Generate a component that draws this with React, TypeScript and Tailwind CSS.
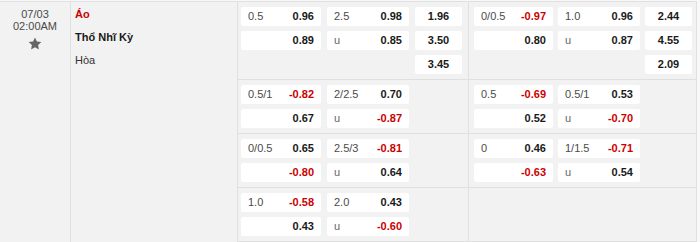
import React from "react";

type Cell = { l?: string; v: string } | null;
type Row = [Cell, Cell, string | null];

const isNeg = (v: string) => v.startsWith("-");

function Box({ cell, w }: { cell: Cell; w: string }) {
  if (!cell) return <div className={w} />;
  return (
    <div className={`${w} h-[19px] bg-white rounded-[2px] flex items-center justify-between px-[7px] leading-[19px]`}>
      <span className={cell.l === "u" ? "text-[#666]" : "text-[#4a4a4a]"}>{cell.l ?? ""}</span>
      <span className={`font-bold ${isNeg(cell.v) ? "text-[#cc0000]" : "text-[#1a1a1a]"}`}>{cell.v}</span>
    </div>
  );
}

function One({ v, w }: { v: string | null; w: string }) {
  if (!v) return <div className={w} />;
  return (
    <div className={`${w} h-[19px] bg-white rounded-[2px] flex items-center justify-center leading-[19px] font-bold text-[#1a1a1a]`}>
      {v}
    </div>
  );
}

function SectionA({ rows }: { rows: Row[] }) {
  return (
    <div className="w-[231px] shrink-0 border-r border-[#e0e0e0] pl-[3px] py-[5px] flex flex-col gap-[5px]">
      {rows.map((r, i) => (
        <div key={i} className="flex gap-[6px] h-[19px]">
          <Box cell={r[0]} w="w-[80px]" />
          <Box cell={r[1]} w="w-[82px]" />
          <One v={r[2]} w="w-[47px]" />
        </div>
      ))}
    </div>
  );
}

function SectionB({ rows }: { rows: Row[] }) {
  return (
    <div className="w-[228px] shrink-0 border-r border-[#e0e0e0] pl-[5px] py-[5px] flex flex-col gap-[5px]">
      {rows.map((r, i) => (
        <div key={i} className="flex gap-[5px] h-[19px]">
          <Box cell={r[0]} w="w-[79px]" />
          <Box cell={r[1]} w="w-[82px]" />
          <One v={r[2]} w="w-[47px]" />
        </div>
      ))}
    </div>
  );
}

const groups: { a: Row[]; b: Row[] }[] = [
  {
    a: [
      [{ l: "0.5", v: "0.96" }, { l: "2.5", v: "0.98" }, "1.96"],
      [{ v: "0.89" }, { l: "u", v: "0.85" }, "3.50"],
      [null, null, "3.45"],
    ],
    b: [
      [{ l: "0/0.5", v: "-0.97" }, { l: "1.0", v: "0.96" }, "2.44"],
      [{ v: "0.80" }, { l: "u", v: "0.87" }, "4.55"],
      [null, null, "2.09"],
    ],
  },
  {
    a: [
      [{ l: "0.5/1", v: "-0.82" }, { l: "2/2.5", v: "0.70" }, null],
      [{ v: "0.67" }, { l: "u", v: "-0.87" }, null],
    ],
    b: [
      [{ l: "0.5", v: "-0.69" }, { l: "0.5/1", v: "0.53" }, null],
      [{ v: "0.52" }, { l: "u", v: "-0.70" }, null],
    ],
  },
  {
    a: [
      [{ l: "0/0.5", v: "0.65" }, { l: "2.5/3", v: "-0.81" }, null],
      [{ v: "-0.80" }, { l: "u", v: "0.64" }, null],
    ],
    b: [
      [{ l: "0", v: "0.46" }, { l: "1/1.5", v: "-0.71" }, null],
      [{ v: "-0.63" }, { l: "u", v: "0.54" }, null],
    ],
  },
  {
    a: [
      [{ l: "1.0", v: "-0.58" }, { l: "2.0", v: "0.43" }, null],
      [{ v: "0.43" }, { l: "u", v: "-0.60" }, null],
    ],
    b: [
      [null, null, null],
      [null, null, null],
    ],
  },
];

export default function App() {
  return (
    <div className="w-[700px] h-[242px] overflow-hidden bg-[#f8f8f8] pt-[1px] font-['Liberation_Sans',Arial,sans-serif] text-[11px]">
      <div className="w-[697px] flex bg-[#f2f2f2] border-t border-[#e0e0e0]">
        <div className="w-[71px] shrink-0 border-r border-[#e0e0e0] pt-[6px] flex flex-col items-center text-[#4a4a4a] leading-[12px]">
          <div>07/03</div>
          <div>02:00AM</div>
          <svg className="mt-[5px]" width="14" height="13" viewBox="0 0 24 23">
            <path
              d="M12 0.8l3.4 7.1 7.8 1-5.7 5.4 1.4 7.7L12 18.3 5.1 22l1.4-7.7L0.8 8.9l7.8-1z"
              fill="#666"
            />
          </svg>
        </div>
        <div className="w-[167px] shrink-0 border-r border-[#e0e0e0] pl-[4px] pt-[1px] leading-[23px]">
          <div className="font-bold text-[#cc0000]">Áo</div>
          <div className="font-bold text-[#1a1a1a]">Thổ Nhĩ Kỳ</div>
          <div className="text-[#333]">Hòa</div>
        </div>
        <div className="flex flex-col">
          {groups.map((g, i) => (
            <div key={i} className="flex border-b border-[#e0e0e0]">
              <SectionA rows={g.a} />
              <SectionB rows={g.b} />
            </div>
          ))}
        </div>
      </div>
    </div>
  );
}
